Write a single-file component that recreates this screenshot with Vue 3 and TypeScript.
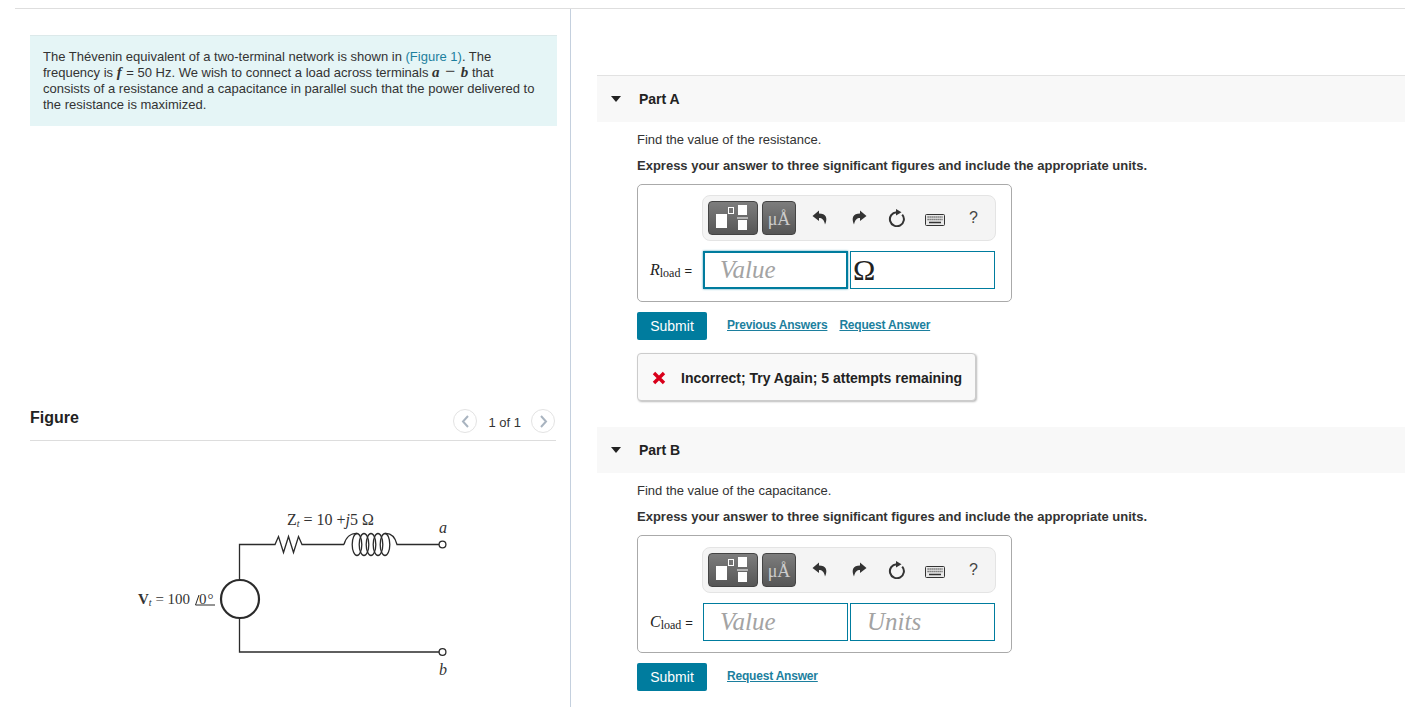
<template>
  <div class="page">
    <section class="left">
      <div class="intro">
        The Thévenin equivalent of a two-terminal network is shown in <a class="fig-link">(Figure 1)</a>. The<br />
        frequency is <i class="math fn">f</i> = 50 Hz. We wish to connect a load across terminals <i class="math">a</i> <span class="minus">−</span> <i class="math">b</i> that<br />
        consists of a resistance and a capacitance in parallel such that the power delivered to<br />
        the resistance is maximized.
      </div>

      <div class="figure-head">
        <h3>Figure</h3>
        <div class="pager">
          <span class="round">
            <svg width="9" height="13" viewBox="0 0 9 13"><path d="M7 1 L2 6.5 L7 12" fill="none" stroke="#a9b4c0" stroke-width="2" /></svg>
          </span>
          <span class="count">1 of 1</span>
          <span class="round">
            <svg width="9" height="13" viewBox="0 0 9 13"><path d="M2 1 L7 6.5 L2 12" fill="none" stroke="#a9b4c0" stroke-width="2" /></svg>
          </span>
        </div>
      </div>

      <svg class="circuit" width="340" height="190" viewBox="120 500 340 190">
        <g fill="none" stroke="#2b2b2b" stroke-width="1.3">
          <path d="M239.5 580 V544.5 H275 l3.5 -8 l5 16 l5 -16 l5 16 l5 -16 l3.5 8 H344" />
          <path d="M344 544.5 C346 537 351 533 357 533.5" />
          <ellipse cx="357" cy="544.5" rx="4.8" ry="11" />
          <ellipse cx="364" cy="544.5" rx="4.8" ry="11" />
          <ellipse cx="371" cy="544.5" rx="4.8" ry="11" />
          <ellipse cx="378" cy="544.5" rx="4.8" ry="11" />
          <ellipse cx="385" cy="544.5" rx="4.8" ry="11" />
          <path d="M385 533.5 C391 533 395 537 397 544.5 H439" />
          <circle cx="442.5" cy="544.5" r="3.4" />
          <path d="M239.5 618 V652 H439" />
          <circle cx="442.5" cy="652" r="3.4" />
          <circle cx="240" cy="599" r="19" stroke-width="2.2" />
          <path d="M195.5 605 L199 595 M195.5 605 H215" stroke-width="1" />
        </g>
        <g class="circuit-text">
          <text x="287" y="525">Z<tspan class="t-sub" dy="2">t</tspan><tspan dy="-2"> = 10 +</tspan><tspan font-style="italic">j</tspan>5 Ω</text>
          <text x="439" y="533" font-style="italic">a</text>
          <text x="439" y="675" font-style="italic">b</text>
          <text class="source" x="138" y="604"><tspan font-weight="bold">V</tspan><tspan class="t-sub" dy="2">t</tspan><tspan dy="-2"> = 100</tspan></text>
          <text class="source deg" x="199" y="604">0°</text>
        </g>
      </svg>
    </section>

    <section class="right">
      <div v-for="part in parts" :key="part.title" class="part">
        <div class="part-head">
          <span class="caret"></span>
          <span class="part-title">{{ part.title }}</span>
        </div>
        <div class="part-body">
          <p class="find">{{ part.question }}</p>
          <p class="express">Express your answer to three significant figures and include the appropriate units.</p>

          <div class="answer-box">
            <div class="toolbar">
              <span class="tool-btn wide">
                <svg width="48" height="32" viewBox="1 1 48 32">
                  <rect x="8" y="13" width="11" height="14" fill="#fff" />
                  <rect x="20.5" y="6.5" width="5" height="6" fill="none" stroke="#fff" />
                  <rect x="30" y="4" width="9" height="10" fill="#fff" />
                  <rect x="29" y="16.5" width="11" height="1" fill="#fff" />
                  <rect x="30" y="19" width="9" height="10" fill="#fff" />
                </svg>
              </span>
              <span class="tool-btn narrow">μÅ</span>
              <svg class="ico undo" width="16" height="16" viewBox="0 0 16 16"><path d="M7 0.5 L0.5 6 L7 11 V8 C10 8 12 9.5 13 14.5 C16 8 14 3.5 7 3.5 Z" fill="#333" /></svg>
              <svg class="ico redo" width="16" height="16" viewBox="0 0 16 16"><path d="M9 0.5 L15.5 6 L9 11 V8 C6 8 4 9.5 3 14.5 C0 8 2 3.5 9 3.5 Z" fill="#333" /></svg>
              <svg class="ico reset" width="18" height="18" viewBox="0 0 18 18">
                <path d="M14.2 5.6 A7 7 0 1 1 8.5 3.2" fill="none" stroke="#333" stroke-width="2" />
                <path d="M8 0 L13.5 3.2 L8 6.5 Z" fill="#333" />
              </svg>
              <svg class="ico keys" width="20" height="12" viewBox="0 0 20 12">
                <rect x="0.5" y="0.5" width="19" height="11" rx="1" fill="#e8e8e8" stroke="#333" />
                <path d="M2.5 3 H17.5 M2.5 5.5 H17.5" stroke="#555" stroke-width="1.3" stroke-dasharray="1.2 0.8" />
                <path d="M4 8.5 H16" stroke="#333" stroke-width="1.5" />
              </svg>
              <span class="help">?</span>
            </div>

            <div class="answer-row">
              <span class="label"><i>{{ part.symbol }}</i><sub>load</sub><span class="eq">=</span></span>
              <div class="field" :class="{ focused: part.focused }"><span class="ph">Value</span></div>
              <div class="field units">
                <span v-if="part.unit" class="unit">{{ part.unit }}</span>
                <span v-else class="ph">Units</span>
              </div>
            </div>
          </div>

          <div class="actions">
            <button class="submit">Submit</button>
            <a v-if="part.hasPrevious" class="link">Previous Answers</a>
            <a class="link">Request Answer</a>
          </div>

          <div v-if="part.feedback" class="feedback">
            <svg width="14" height="14" viewBox="0 0 14 14"><path d="M2 2 L12 12 M12 2 L2 12" stroke="#d9001b" stroke-width="3.4" /></svg>
            <span>{{ part.feedback }}</span>
          </div>
        </div>
      </div>
    </section>
  </div>
</template>

<script setup lang="ts">
interface Part {
  title: string
  question: string
  symbol: string
  unit: string
  focused: boolean
  hasPrevious: boolean
  feedback: string
}

const parts: Part[] = [
  {
    title: 'Part A',
    question: 'Find the value of the resistance.',
    symbol: 'R',
    unit: 'Ω',
    focused: true,
    hasPrevious: true,
    feedback: 'Incorrect; Try Again; 5 attempts remaining',
  },
  {
    title: 'Part B',
    question: 'Find the value of the capacitance.',
    symbol: 'C',
    unit: '',
    focused: false,
    hasPrevious: false,
    feedback: '',
  },
]
</script>

<style>
html, body { margin: 0; background: #fff; overflow: hidden; }
</style>

<style scoped>
.page {
  display: flex;
  height: 699px;
  margin-top: 8px;
  margin-left: 15px;
  border-top: 1px solid #dedede;
  font-family: "Liberation Sans", Arial, sans-serif;
  color: #333;
  overflow: hidden;
}
.left {
  width: 556px;
  flex: none;
  box-sizing: border-box;
  padding: 26px 13px 0 15px;
  border-right: 1px solid #c4d0de;
}
.intro {
  background: #e5f5f6;
  border-top: 1px solid #dce9ea;
  padding: 13px 0 14px 13px;
  height: 91px;
  box-sizing: border-box;
  font-size: 13px;
  line-height: 16px;
  white-space: nowrap;
}
.fig-link { color: #1c7f9e; }
.math { font-family: "Liberation Serif", serif; font-weight: bold; font-size: 15px; line-height: 0; }
.fn { margin-right: 1px; }
.minus { color: #555; font-size: 17px; line-height: 0; margin: 0 2px; }
.figure-head {
  display: flex;
  align-items: center;
  justify-content: space-between;
  margin-top: 277px;
  height: 37px;
  width: 526px;
  border-bottom: 1px solid #ddd;
}
.figure-head h3 { margin: 0 0 7px; font-size: 16px; font-weight: bold; color: #222; }
.pager { display: flex; align-items: center; margin: 0 1px 1px 0; }
.round {
  width: 24px;
  height: 24px;
  box-sizing: border-box;
  border: 1px solid #e3e3e3;
  border-radius: 50%;
  display: flex;
  align-items: center;
  justify-content: center;
}
.count { font-size: 13px; margin: 2px 10px 0 11px; }
.circuit { display: block; margin: 59px 0 0 90px; }
.circuit-text { font-family: "Liberation Serif", serif; font-size: 16px; fill: #333; }
.source { font-size: 15px; }
.deg { letter-spacing: 1px; }
.t-sub { font-size: 10px; font-style: italic; }
.right { flex: 1; padding: 66px 0 0 26px; min-width: 0; }
.part { margin-bottom: 25px; }
.part-head {
  display: flex;
  align-items: center;
  height: 46px;
  background: #f8f8f8;
  background-clip: padding-box;
  border-top: 1px solid transparent;
}
.part:first-child .part-head { border-top-color: #e2e2e2; }
.caret {
  width: 0;
  height: 0;
  margin-left: 14px;
  border-left: 5.5px solid transparent;
  border-right: 5.5px solid transparent;
  border-top: 6px solid #222;
}
.part-title { margin-left: 18px; font-size: 14px; font-weight: bold; color: #222; }
.part-body { padding-left: 40px; }
.find { margin: 0; padding-top: 11px; font-size: 13px; line-height: 14px; }
.express { margin: 11px 0 0; font-size: 13px; font-weight: bold; line-height: 16px; }
.answer-box {
  width: 375px;
  height: 118px;
  box-sizing: border-box;
  margin-top: 10px;
  border: 1px solid #aaa;
  border-radius: 5px;
  padding: 10px 15px 0 64px;
}
/* content of the second box sits 1px lower in the original */
.part:last-child .answer-box { padding-top: 11px; }
.toolbar {
  display: flex;
  align-items: center;
  height: 46px;
  box-sizing: border-box;
  background: #f4f4f4;
  border: 1px solid #e4e4e4;
  border-radius: 8px;
  padding-left: 5px;
}
.tool-btn {
  display: flex;
  align-items: center;
  justify-content: center;
  height: 34px;
  box-sizing: border-box;
  background: linear-gradient(#7d7d7d, #565656);
  border: 1px solid #444;
  border-radius: 4px;
  flex: none;
}
.wide { width: 50px; margin-right: 4px; }
.narrow { width: 34px; padding-top: 2px; color: #ccc; font-family: "Liberation Serif", serif; font-size: 18px; }
.ico { flex: none; }
.undo { margin-left: 16px; }
.redo { margin-left: 23px; }
.reset { margin-left: 21px; }
.keys { margin-left: 19px; margin-top: 3px; }
.help { margin-left: 24px; font-size: 16px; color: #444; }
.answer-row { display: flex; align-items: center; margin-top: 10px; margin-left: -64px; }
.label {
  width: 65px;
  flex: none;
  box-sizing: border-box;
  padding-left: 12px;
  font-family: "Liberation Serif", serif;
  font-size: 16px;
  color: #222;
  white-space: nowrap;
}
.label sub { font-size: 12px; vertical-align: -2px; line-height: 0; }
.eq { margin-left: 4px; font-family: "Liberation Sans", sans-serif; font-size: 13px; }
.field {
  width: 145px;
  height: 38px;
  box-sizing: border-box;
  border: 1px solid #007c9e;
  display: flex;
  align-items: center;
  padding-left: 16px;
  margin-right: 2px;
  font-family: "Liberation Serif", serif;
}
.field.focused { border-width: 2px; padding-left: 15px; box-shadow: 0 0 2px #3f9db6; }
.units { margin-right: 0; }
.units:has(.unit) { padding-left: 2px; }
.ph { font-size: 25px; font-style: italic; color: #a3a3a3; }
.unit { font-size: 30px; color: #222; }
.actions { display: flex; align-items: center; margin-top: 10px; }
.submit {
  width: 70px;
  height: 28px;
  padding: 0;
  background: #007c9e;
  border: none;
  border-radius: 2px;
  color: #fff;
  font-family: inherit;
  font-size: 14px;
}
.link {
  margin-left: 12px;
  margin-bottom: 3px;
  font-size: 12px;
  letter-spacing: -0.2px;
  font-weight: bold;
  color: #1c7f9e;
  text-decoration: underline;
}
.submit + .link { margin-left: 20px; }
.feedback {
  display: flex;
  align-items: center;
  width: 339px;
  height: 48px;
  box-sizing: border-box;
  margin-top: 13px;
  padding: 1px 0 0 14px;
  gap: 15px;
  background: #f9f9f9;
  border: 1px solid #ccc;
  border-radius: 4px;
  box-shadow: 1px 1px 2px #bbb;
  font-size: 14px;
  font-weight: bold;
  color: #222;
  white-space: nowrap;
}
</style>
